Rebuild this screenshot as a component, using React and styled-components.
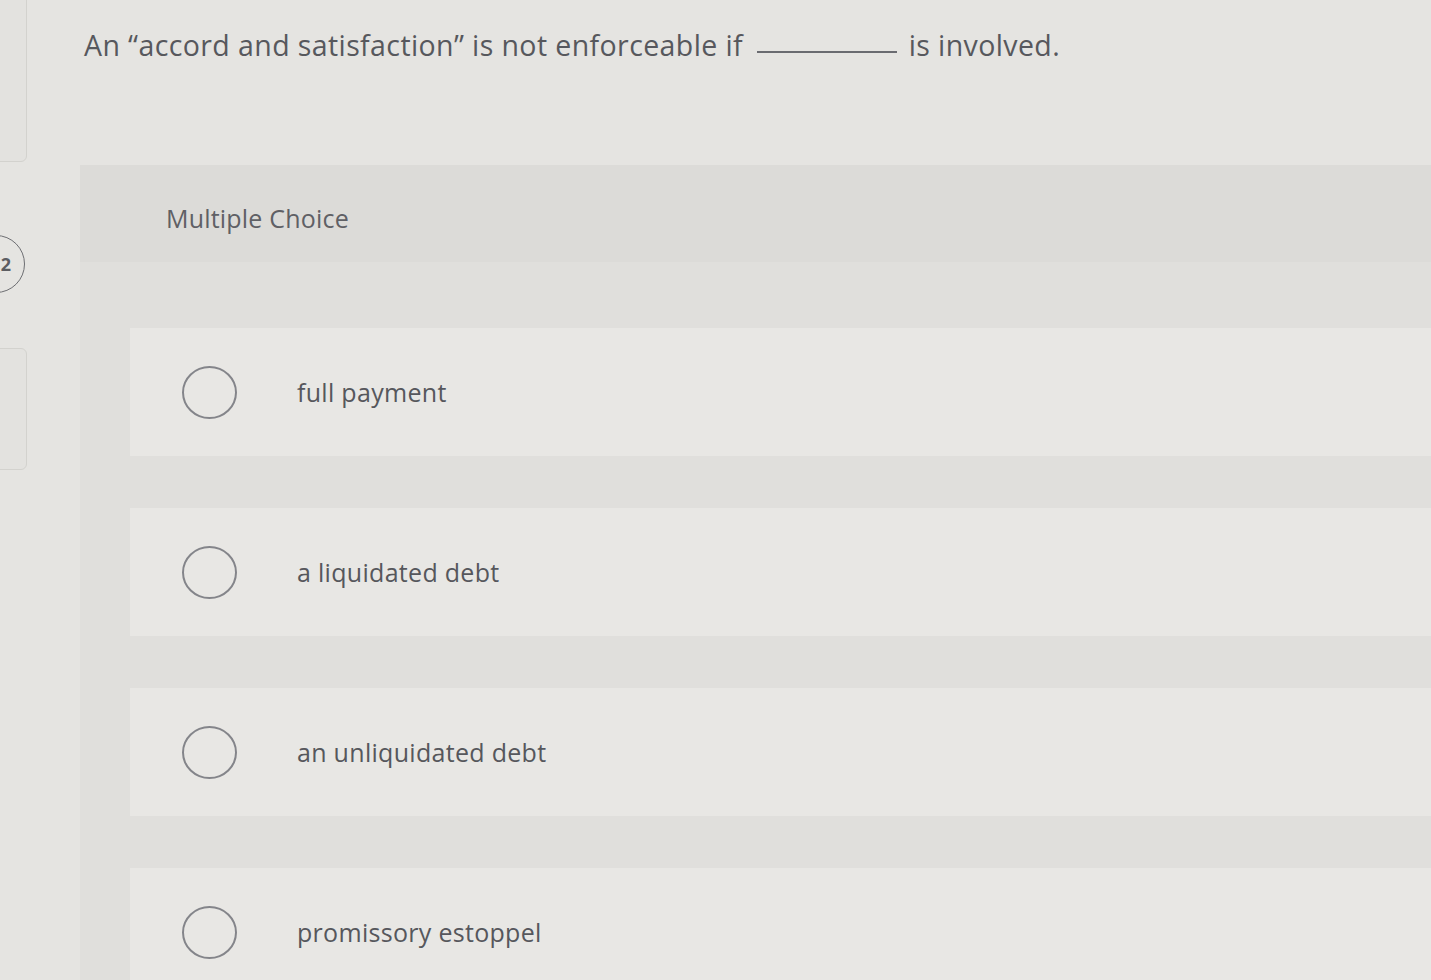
import React from "react";
import styled, { createGlobalStyle } from "styled-components";

const GlobalStyle = createGlobalStyle`
  html, body {
    margin: 0;
    padding: 0;
    background: #e5e4e1;
    font-family: "Open Sans", "Noto Sans", sans-serif;
    overflow: hidden;
  }
`;

const options = ["full payment", "a liquidated debt", "an unliquidated debt", "promissory estoppel"];

export default function App() {
  return (
    <>
      <GlobalStyle />
      <Page>
        <Rail>
          <RailCard $height={170} $top={-10} />
          <QuestionNumber>2</QuestionNumber>
          <RailCard $height={120} $top={55} />
        </Rail>
        <Main>
          <Prompt>
            An “accord and satisfaction” is not enforceable if <Blank /> is involved.
          </Prompt>
          <Panel>
            <PanelHeader>Multiple Choice</PanelHeader>
            <OptionList>
              {options.map((label) => (
                <Option key={label}>
                  <Radio />
                  <OptionLabel>{label}</OptionLabel>
                </Option>
              ))}
            </OptionList>
          </Panel>
        </Main>
      </Page>
    </>
  );
}

const Page = styled.div`
  display: flex;
  width: 1431px;
  height: 980px;
  overflow: hidden;
`;

const Rail = styled.div`
  width: 28px;
  flex-shrink: 0;
  display: flex;
  flex-direction: column;
  align-items: flex-end;
`;

const RailCard = styled.div`
  width: 60px;
  height: ${(p) => p.$height}px;
  margin-top: ${(p) => p.$top}px;
  border: 1.5px solid #d3d2ce;
  border-radius: 0 6px 6px 0;
  background: #e3e2df;
  margin-right: 1px;
  flex-shrink: 0;
`;

const QuestionNumber = styled.div`
  width: 58px;
  height: 58px;
  margin-top: 73px;
  margin-right: 3px;
  border: 1.5px solid #6d6e72;
  border-radius: 50%;
  display: flex;
  align-items: center;
  justify-content: flex-end;
  padding-right: 13px;
  box-sizing: border-box;
  font-size: 18px;
  font-weight: 700;
  color: #5c5d62;
  flex-shrink: 0;
`;

const Main = styled.div`
  flex: 1;
  display: flex;
  flex-direction: column;
  padding-left: 52px;
  min-height: 0;
`;

const Prompt = styled.div`
  margin: 26px 0 0 4px;
  height: 139px;
  flex-shrink: 0;
  font-size: 28.5px;
  font-weight: 500;
  color: #57585d;
  letter-spacing: 0.4px;
`;

const Blank = styled.span`
  display: inline-block;
  width: 140px;
  border-bottom: 2px solid #6a6b70;
  margin: 0 4px 0 6px;
  transform: translateY(-3px);
`;

const Panel = styled.div`
  flex: 1;
  min-height: 0;
  overflow: hidden;
  background: #e0dfdc;
  display: flex;
  flex-direction: column;
`;

const PanelHeader = styled.div`
  height: 97px;
  flex-shrink: 0;
  box-sizing: border-box;
  padding: 8px 0 0 86px;
  background: #dcdbd8;
  display: flex;
  align-items: center;
  font-size: 25px;
  font-weight: 500;
  color: #5f6065;
  letter-spacing: 0.2px;
`;

const OptionList = styled.div`
  display: flex;
  flex-direction: column;
  gap: 52px;
  padding: 66px 0 0 50px;
  flex-shrink: 0;
`;

const Option = styled.div`
  height: 128px;
  background: #e8e7e4;
  display: flex;
  align-items: center;
  padding-left: 52px;
  gap: 60px;
  flex-shrink: 0;
`;

const Radio = styled.span`
  width: 51px;
  height: 49px;
  border: 2px solid #84858a;
  border-radius: 50%;
  flex-shrink: 0;
`;

const OptionLabel = styled.span`
  font-size: 25px;
  font-weight: 500;
  color: #56575c;
  letter-spacing: 0.3px;
`;
